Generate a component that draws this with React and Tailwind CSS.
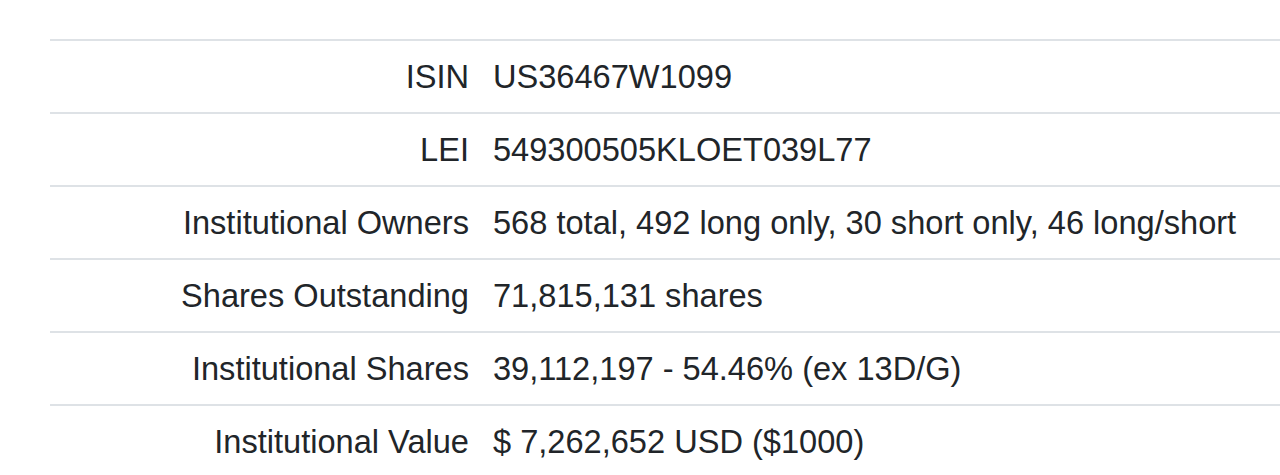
const filas = [
  ["ISIN", "US36467W1099"],
  ["LEI", "549300505KLOET039L77"],
  ["Institutional Owners", "568 total, 492 long only, 30 short only, 46 long/short"],
  ["Shares Outstanding", "71,815,131 shares"],
  ["Institutional Shares", "39,112,197 - 54.46% (ex 13D/G)"],
  ["Institutional Value", "$ 7,262,652 USD ($1000)"],
];

export default function App() {
  return (
    <div className="h-[475px] overflow-hidden bg-white pt-[39px] pl-[50px] font-['Liberation_Sans',Arial,sans-serif] text-[32.6px] text-[#212529]">
      <table className="w-full border-collapse">
        <tbody>
          {filas.map(([label, valor]) => (
            <tr key={label} className="border-t-2 border-[#dee2e6]">
              <td className="w-[431px] h-[73px] pr-3 text-right align-middle leading-[36px] whitespace-nowrap">{label}</td>
              <td className="h-[73px] pl-3 align-middle leading-[36px] whitespace-nowrap">{valor}</td>
            </tr>
          ))}
        </tbody>
      </table>
    </div>
  );
}
